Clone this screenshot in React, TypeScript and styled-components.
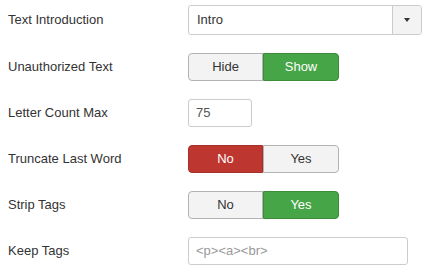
import React from 'react';
import styled, { createGlobalStyle } from 'styled-components';

const GlobalStyle = createGlobalStyle`
  body {
    margin: 0;
    background: #fff;
    font-family: "Liberation Sans", Arial, sans-serif;
    font-size: 13px;
    color: #333;
  }
`

const Form = styled.div`
  display: flex;
  flex-direction: column;
  gap: 18px;
  padding: 5px 0 0 8px;
`

const Row = styled.div`
  display: flex;
  flex-direction: row;
  align-items: center;
`

const Label = styled.div`
  width: 180px;
  flex-shrink: 0;
  line-height: 18px;
`

const Select = styled.div`
  display: flex;
  width: 234px;
  height: 30px;
  box-sizing: border-box;
  border: 1px solid #ccc;
  border-radius: 3px;
  overflow: hidden;
`

const SelectValue = styled.div`
  flex: 1;
  padding-left: 8px;
  line-height: 28px;
`

const SelectButton = styled.div`
  width: 28px;
  border-left: 1px solid #ccc;
  background: #f3f3f3;
  display: flex;
  align-items: center;
  justify-content: center;
`

const Caret = styled.div`
  width: 0;
  height: 0;
  border-left: 3.5px solid transparent;
  border-right: 3.5px solid transparent;
  border-top: 4px solid #333;
`

const Input = styled.div<{ $width: number; $placeholder?: boolean }>`
  width: ${p => p.$width}px;
  height: 28px;
  box-sizing: border-box;
  border: 1px solid #ccc;
  border-radius: 3px;
  padding-left: 7px;
  line-height: 26px;
  color: ${p => (p.$placeholder ? '#999' : '#555')};
`

const ToggleGroup = styled.div`
  display: flex;
  height: 28px;
`

type Tone = 'off' | 'green' | 'red'

const ToggleButton = styled.div<{ $tone: Tone }>`
  width: 75px;
  box-sizing: border-box;
  text-align: center;
  line-height: 26px;
  border: 1px solid ${p => (p.$tone === 'green' ? '#3b8b3b' : p.$tone === 'red' ? '#a6302a' : '#b3b3b3')};
  background: ${p => (p.$tone === 'green' ? '#46a546' : p.$tone === 'red' ? '#bd362f' : '#f3f3f3')};
  color: ${p => (p.$tone === 'off' ? '#333' : '#fff')};

  &:first-child {
    border-radius: 4px 0 0 4px;
  }
  &:last-child {
    width: 76px;
    border-radius: 0 4px 4px 0;
  }
`

interface ToggleProps {
  options: string[]
  active: number
  tone: Tone
}

const Toggle = (props: ToggleProps) => (
  <ToggleGroup>
    {props.options.map((opt, i) =>
      <ToggleButton key={opt} $tone={i === props.active ? props.tone : 'off'}>{opt}</ToggleButton>
    )}
  </ToggleGroup>
)

export default function App() {
  return (
    <>
      <GlobalStyle />
      <Form>
        <Row>
          <Label>Text Introduction</Label>
          <Select>
            <SelectValue>Intro</SelectValue>
            <SelectButton><Caret /></SelectButton>
          </Select>
        </Row>
        <Row>
          <Label>Unauthorized Text</Label>
          <Toggle options={['Hide', 'Show']} active={1} tone="green" />
        </Row>
        <Row>
          <Label>Letter Count Max</Label>
          <Input $width={64}>75</Input>
        </Row>
        <Row>
          <Label>Truncate Last Word</Label>
          <Toggle options={['No', 'Yes']} active={0} tone="red" />
        </Row>
        <Row>
          <Label>Strip Tags</Label>
          <Toggle options={['No', 'Yes']} active={1} tone="green" />
        </Row>
        <Row>
          <Label>Keep Tags</Label>
          <Input $width={220} $placeholder>&lt;p&gt;&lt;a&gt;&lt;br&gt;</Input>
        </Row>
      </Form>
    </>
  )
}
